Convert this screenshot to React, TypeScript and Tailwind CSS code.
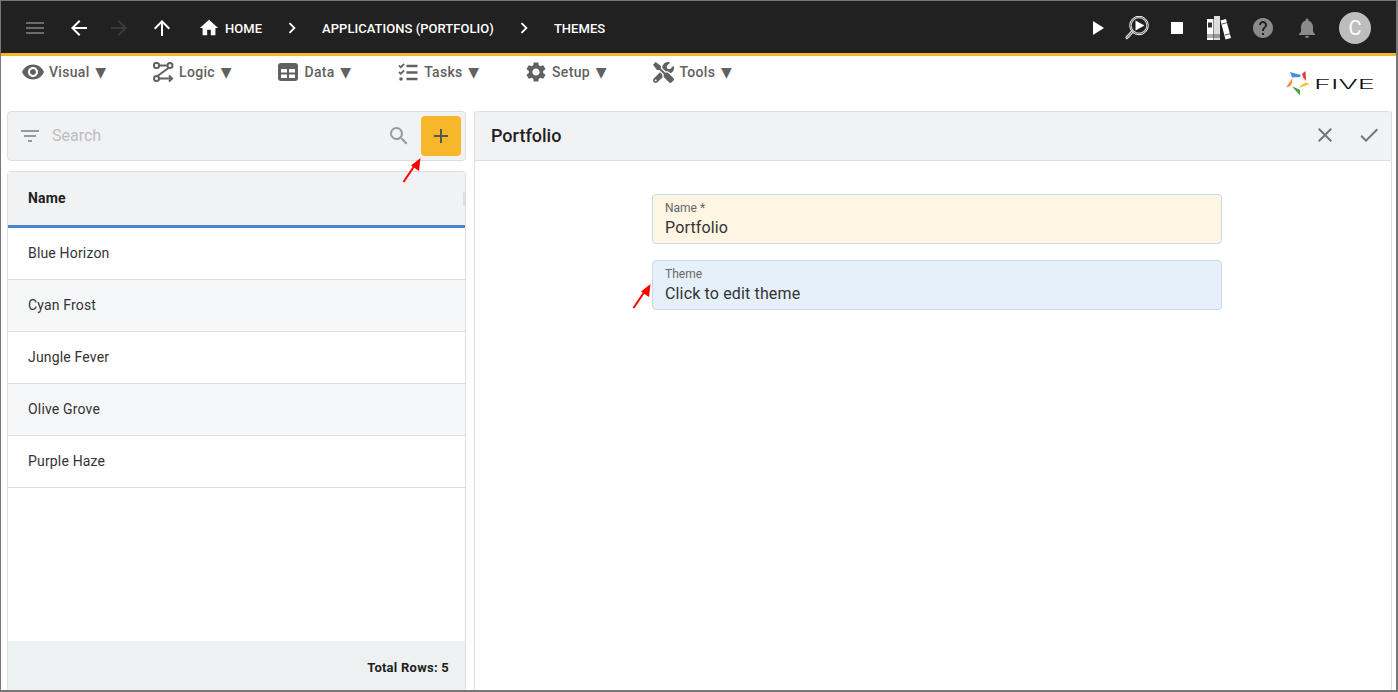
import React from "react";
import { FaTools } from "react-icons/fa";
import {
  MdMenu,
  MdArrowBack,
  MdArrowForward,
  MdArrowUpward,
  MdHome,
  MdChevronRight,
  MdPlayArrow,
  MdStop,
  MdHelp,
  MdNotifications,
  MdVisibility,
  MdSettings,
  MdFilterList,
  MdSearch,
  MdAdd,
  MdClose,
  MdCheck,
} from "react-icons/md";

const LogicIcon = () => (
  <svg width="24" height="24" viewBox="0 0 24 24" fill="none" stroke="#616161" strokeWidth="2">
    <rect x="3" y="3" width="5" height="5" rx="2" />
    <circle cx="19" cy="5.5" r="2.5" />
    <circle cx="5.5" cy="18.5" r="2.5" />
    <path d="M8 5.5h8.5M17.5 8L6.5 16M8 18.5h13M18 15.5l3 3-3 3" />
  </svg>
);

const DataIcon = () => (
  <svg width="24" height="24" viewBox="0 0 24 24">
    <rect x="2" y="3" width="20" height="18" rx="3" fill="#616161" />
    <path d="M5 9h6v3.500H5zM13 9h6v3.500h-6zM5 14.500h6V18H5zM13 14.500h6V18h-6z" fill="#fff" />
  </svg>
);

const TasksIcon = () => (
  <svg width="24" height="24" viewBox="0 0 24 24" fill="none" stroke="#616161">
    <path d="M3 5.500l1.800 1.800L8 4M3 12l1.800 1.800L8 10.500" strokeWidth="1.800" />
    <circle cx="5" cy="19" r="1.800" fill="#616161" stroke="none" />
    <path d="M10.500 6h11M10.500 12.500h11M10.500 19h11" strokeWidth="2.400" />
  </svg>
);

const InspectIcon = () => (
  <svg width="24" height="24" viewBox="0 0 24 24" fill="none">
    <circle cx="14" cy="9.500" r="9.300" stroke="#fff" strokeWidth="1" />
    <circle cx="14" cy="9.500" r="7.800" stroke="#c4c4c4" strokeWidth="1.200" />
    <path d="M10.500 4.500l9 5-9 5z" fill="#fff" />
    <path d="M7 16L2 21.500" stroke="#ddd" strokeWidth="3.200" strokeLinecap="round" />
    <path d="M7 16L2 21.500" stroke="#333" strokeWidth="0.800" strokeLinecap="round" />
  </svg>
);

const BooksIcon = () => (
  <svg width="24" height="24" viewBox="0 0 24 24">
    <path d="M0 3h6.500v21H0z" fill="#fff" />
    <path d="M7 0h6v24H7z" fill="#ddd" />
    <path d="M13.500 4.500l5.500-1.500 5 19-5.500 1.500z" fill="#fff" />
    <path d="M1 6.500h4v5H1z" fill="#333" />
    <path d="M0 19h13M0 21h13" stroke="#333" strokeWidth="0.800" />
    <path d="M15 8l5-1.300M18 19l5-1.300" stroke="#333" strokeWidth="0.800" />
  </svg>
);

const FiveLogo = () => (
  <div className="flex items-center">
    <svg width="24" height="25" viewBox="0 0 24 25">
      <path d="M4 1l11 3-1 2-8 .5z" fill="#4a90e2" />
      <path d="M19.500 0l.5 10-2.500-3-1.500-4z" fill="#e53935" />
      <path d="M24 13l-11 4 2-2.500 4.500-3z" fill="#fbc02d" />
      <path d="M15 24.500l-8-9 4 1.500 4 2z" fill="#43a047" transform="translate(-1 0)" />
      <path d="M0 16.500l6.500-9.500-.5 5-1.500 3z" fill="#fb8c32" />
    </svg>
    <svg width="61" height="14" viewBox="0 0 61 14" className="ml-[4px]">
      <text
        x="0"
        y="12"
        textLength="61"
        lengthAdjust="spacingAndGlyphs"
        fontSize="13"
        fontWeight="300"
        fontFamily="Inter, sans-serif"
        fill="#111"
      >
        FIVE
      </text>
    </svg>
  </div>
);

const Arrow = ({ className }: { className: string }) => (
  <svg width="20" height="26" viewBox="0 0 20 26" className={className}>
    <path d="M1.500 25L13 8" stroke="#f00" strokeWidth="2" />
    <path d="M18.500 1l-1.500 13-8-5.500z" fill="#f00" />
  </svg>
);

const menuItems = [
  { label: "Visual", icon: <MdVisibility size={24} color="#616161" /> },
  { label: "Logic", icon: <LogicIcon /> },
  { label: "Data", icon: <DataIcon /> },
  { label: "Tasks", icon: <TasksIcon /> },
  { label: "Setup", icon: <MdSettings size={24} color="#616161" /> },
  {
    label: "Tools",
    icon: (
      <span className="w-6 h-6 flex items-center justify-center">
        <FaTools size={21} color="#616161" />
      </span>
    ),
  },
];

const rows = ["Blue Horizon", "Cyan Frost", "Jungle Fever", "Olive Grove", "Purple Haze"];

const Crumb = ({ children }: { children: React.ReactNode }) => (
  <span className="text-[13px] font-medium tracking-[0.04px] text-white">{children}</span>
);

export default function App() {
  return (
    <div className="h-screen w-screen overflow-hidden flex flex-col bg-white border-l border-r-2 border-b-2 border-t border-[#777] font-['Roboto',sans-serif]">
      {/* top bar */}
      <div className="h-[55px] shrink-0 flex items-center bg-[#212121] border-b-[3px] border-[#f6b62c] pt-[2px] pl-[22px] pr-[25px]">
        <MdMenu size={24} color="#6b6b6b" />
        <MdArrowBack size={24} color="#fff" className="ml-[20px]" />
        <MdArrowForward size={24} color="#3a3a3a" className="ml-[16px]" />
        <MdArrowUpward size={24} color="#fff" className="ml-[19px]" />
        <MdHome size={22} color="#fff" className="ml-[24px]" />
        <span className="ml-[5px]"><Crumb>HOME</Crumb></span>
        <MdChevronRight size={22} color="#fff" className="ml-[19px]" />
        <span className="ml-[19px]"><Crumb>APPLICATIONS (PORTFOLIO)</Crumb></span>
        <MdChevronRight size={22} color="#fff" className="ml-[19px]" />
        <span className="ml-[19px]"><Crumb>THEMES</Crumb></span>
        <div className="ml-auto flex items-center">
          <MdPlayArrow size={24} color="#fff" />
          <span className="ml-[16px]"><InspectIcon /></span>
          <MdStop size={24} color="#fff" className="ml-[16px]" />
          <span className="ml-[18px]"><BooksIcon /></span>
          <MdHelp size={24} color="#8a8a8a" className="ml-[20px]" />
          <MdNotifications size={24} color="#8a8a8a" className="ml-[20px]" />
          <div className="ml-[20px] w-8 h-8 rounded-full bg-[#bdbdbd] flex items-center justify-center text-white text-[20px]">
            C
          </div>
        </div>
      </div>

      {/* menu row */}
      <div className="h-[55px] shrink-0 flex items-start pl-[20px] pr-[21px] pt-[4px]">
        <div className="flex items-center gap-[45px]">
          {menuItems.map((m) => (
            <div key={m.label} className="flex items-center gap-[4px] text-[14px] font-medium tracking-[0.3px] text-[#616161]">
              {m.icon}
              <span>
                {m.label} <span className="ml-[2px] font-['DejaVu_Sans',sans-serif] tracking-normal">▼</span>
              </span>
            </div>
          ))}
        </div>
        <div className="ml-auto mt-[11px]">
          <FiveLogo />
        </div>
      </div>

      {/* panels */}
      <div className="flex-1 min-h-0 flex gap-[8px] pl-[6px] pr-[4px]">
        <div className="w-[459px] shrink-0 flex flex-col gap-[10px]">
          <div className="relative h-[50px] shrink-0 flex items-center bg-[#f1f2f4] border border-[#dedede] rounded pl-[10px] pr-[4px]">
            <MdFilterList size={24} color="#999" />
            <span className="ml-[10px] text-[16px] text-[#bdbdbd]">Search</span>
            <MdSearch size={24} color="#999" className="ml-auto" />
            <button className="ml-[10px] w-10 h-10 rounded bg-[#f7b72b] flex items-center justify-center">
              <MdAdd size={24} color="#555" />
            </button>
            <Arrow className="absolute left-[394px] top-[45px] z-10" />
          </div>
          <div className="flex-1 min-h-0 flex flex-col border border-[#dedede] border-b-0 rounded-t">
            <div className="relative h-[56px] shrink-0 flex items-center bg-[#f1f2f4] border-b-[3px] border-[#4a86cf] pl-[20px]">
              <span className="text-[14px] font-bold tracking-[0.15px] text-[#212121]">Name</span>
              <span className="absolute right-0 top-[20px] w-[2px] h-[14px] bg-[#dedede]" />
            </div>
            <div className="flex-1 min-h-0">
              {rows.map((r, i) => (
                <div
                  key={r}
                  className={`h-[52px] flex items-center pl-[20px] border-b border-[#dedede] text-[14px] tracking-[0.17px] text-[#333] ${
                    i % 2 === 1 ? "bg-[#f6f7f9]" : "bg-white"
                  }`}
                >
                  {r}
                </div>
              ))}
            </div>
            <div className="h-[49px] shrink-0 flex items-center justify-end pt-[4px] pr-[16px] bg-[#eef1f2] text-[13px] tracking-[0.25px] font-bold text-[#212121]">
              Total Rows: 5
            </div>
          </div>
        </div>

        <div className="flex-1 min-w-0 flex flex-col border-x border-[#dedede]">
          <div className="h-[50px] shrink-0 flex items-center bg-[#f1f2f4] border-t border-b border-[#dedede] rounded-t pb-[2px] pl-[16px] pr-[10px]">
            <span className="text-[18px] font-medium text-[#212121]">Portfolio</span>
            <MdClose size={24} color="#757575" className="ml-auto" />
            <MdCheck size={24} color="#757575" className="ml-[20px]" />
          </div>
          <div className="relative pt-[33px] pl-[177px] flex flex-col gap-[16px]">
            <div className="w-[570px] h-[50px] flex flex-col pt-[6px] pl-[12px] bg-[#fef5e3] border border-[#c9d9ea] rounded">
              <span className="text-[12px] leading-[14px] text-[#666]">Name *</span>
              <span className="mt-[2px] text-[16px] leading-[22px] tracking-[0.15px] text-[#333]">Portfolio</span>
            </div>
            <div className="w-[570px] h-[50px] flex flex-col pt-[6px] pl-[12px] bg-[#e5f0fb] border border-[#c9d9ea] rounded">
              <span className="text-[12px] leading-[14px] text-[#666]">Theme</span>
              <span className="mt-[2px] text-[16px] leading-[22px] tracking-[0.15px] text-[#333]">Click to edit theme</span>
            </div>
            <Arrow className="absolute left-[157px] top-[122px]" />
          </div>
        </div>
      </div>
    </div>
  );
}
